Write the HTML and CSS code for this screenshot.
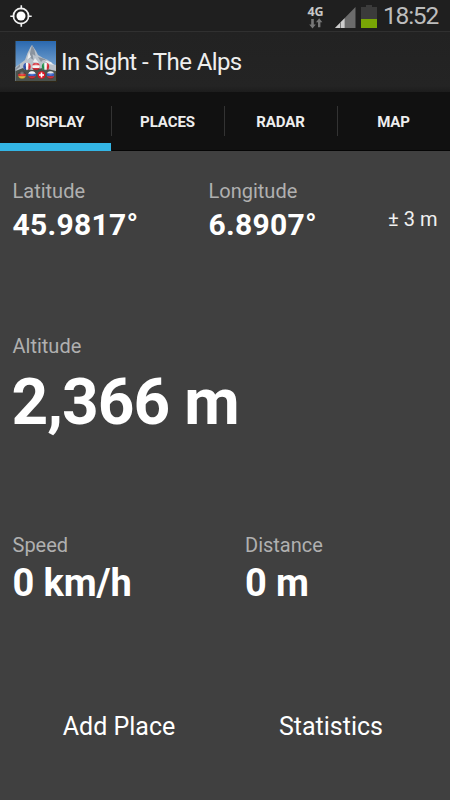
FILE: index.html
```html
<!DOCTYPE html>
<html lang="en">
<head>
<meta charset="utf-8">
<title>In Sight - The Alps</title>
<link rel="stylesheet" href="styles.css">
</head>
<body>
<div class="screen">
  <header class="status">
    <svg class="gps" width="22" height="22" viewBox="0 0 22 22">
      <circle cx="11" cy="11" r="7.6" fill="none" stroke="#f2f2f2" stroke-width="1.7"/>
      <circle cx="11" cy="11" r="4.5" fill="#fff"/>
      <path d="M11.300 .3v4M11.300 17.7v4M.3 11.300h4M17.7 11.300h4" stroke="#f2f2f2" stroke-width="1.600"/>
    </svg>
    <div class="network">
      <span class="network-type">4G</span>
      <svg width="14" height="11" viewBox="0 0 14 11" fill="#777">
        <path d="M2.2 1h2.6v5.5h2L3.5 10.5.2 6.5h2z"/>
        <path d="M9 9.2h2.4V4.2h2L10.2.2 7 4.2h2z"/>
      </svg>
    </div>
    <svg class="signal" width="21" height="21" viewBox="0 0 21 21">
      <path d="M0 21 20.5 0v21z" fill="#6b6b6b"/>
      <path d="M0 21 9.6 11.2V21z" fill="#ccc"/>
      <path d="M5.5 15v6" stroke="#777" stroke-width="1"/>
    </svg>
    <svg class="battery" width="16" height="23" viewBox="0 0 16 23">
      <path d="M5 0h6v2h5v21H0V2h5z" fill="#3b3b3b"/>
      <path d="M0 14h16v9H0z" fill="#78a505"/>
    </svg>
    <span class="clock">18:52</span>
  </header>

  <div class="action-bar">
    <svg class="app-icon" width="42" height="42" viewBox="0 0 42 42">
      <defs>
        <linearGradient id="sky" x1="0" y1="0" x2="0" y2="1">
          <stop offset="0" stop-color="#2a68ae"/><stop offset=".65" stop-color="#76a3d0"/>
        </linearGradient>
        <radialGradient id="shine" cx=".5" cy=".25" r=".75">
          <stop offset="0" stop-color="#fff" stop-opacity=".4"/><stop offset=".6" stop-color="#fff" stop-opacity="0"/><stop offset="1" stop-color="#000" stop-opacity=".4"/>
        </radialGradient>
        <clipPath id="ball"><circle r="3.8"/></clipPath>
      </defs>
      <path d="M0 0h42v42H0z" fill="#302817"/>
      <path d="M.5 1h40.5v40H.5z" fill="url(#sky)"/>
      <path d="M.5 27 6 23 10 20 12.5 13 15.5 7 17 5 19 8 21 11 23 15 28 18 33 20 37 24 41 25V41H.5z" fill="#b9c1ca"/>
      <path d="M17 5 15.5 11l-1 5-3 4 4-2 3 2-1-6 3 2-1-6zM23 17l3 5 2-2 5 4-3-5zM5 24l-4 4v2l4-3z" fill="#8a939e"/>
      <path d="M14 12l-2 8 4-3zM20 18l4 5-6-1zM28 20l6 4 5 1-3-3z" fill="#e9edf0"/>
      <path d="M.5 31 8 28 17 30 28 28 41 31V41H.5z" fill="#4b524d"/>
      <g transform="translate(12 26.5)"><g clip-path="url(#ball)"><path d="M-4-4h8v8h-8z" fill="#f5f5f5"/><path d="M-4-4h3v8h-3z" fill="#2446a4"/><path d="M1.3-4H4v8H1.3z" fill="#d3202c"/></g><circle r="3.8" fill="url(#shine)"/></g>
      <g transform="translate(21 26.5)"><g clip-path="url(#ball)"><path d="M-4-4h8v8h-8z" fill="#d3202c"/><path d="M-4-1.2h8v2.6h-8z" fill="#f5f5f5"/></g><circle r="3.8" fill="url(#shine)"/></g>
      <g transform="translate(30.5 26.5)"><g clip-path="url(#ball)"><path d="M-4-4h8v8h-8z" fill="#f5f5f5"/><path d="M-4-4h2.8v8H-4z" fill="#168a43"/><path d="M1.3-4H4v8H1.3z" fill="#d3202c"/></g><circle r="3.8" fill="url(#shine)"/></g>
      <g transform="translate(7 35)"><g clip-path="url(#ball)"><path d="M-4-4h8v3h-8z" fill="#333"/><path d="M-4-1.3h8v2.6h-8z" fill="#dc2922"/><path d="M-4 1.3h8V4h-8z" fill="#f3c52c"/></g><circle r="3.8" fill="url(#shine)"/></g>
      <g transform="translate(17 35)"><g clip-path="url(#ball)"><path d="M-4-4h8v3h-8z" fill="#f5f5f5"/><path d="M-4-1.3h8v2.6h-8z" fill="#2a55bd"/><path d="M-4 1.3h8V4h-8z" fill="#d3202c"/></g><circle r="3.8" fill="url(#shine)"/></g>
      <g transform="translate(26.5 35)"><circle r="3.8" fill="#dd1624"/><path d="M-.8-2.5H.8v1.7h1.7V.8H.8v1.7H-.8V.8h-1.7V-.8h1.7z" fill="#fff"/></g>
      <g transform="translate(35.5 35)"><g clip-path="url(#ball)"><path d="M-4-4h8v3h-8z" fill="#ddd"/><path d="M-4-1.8h8v3.1h-8z" fill="#2a55bd"/><path d="M-4 1.3h8V4h-8z" fill="#d3202c"/></g><circle r="3.8" fill="url(#shine)"/></g>
    </svg>
    <h1 class="title">In Sight - The Alps</h1>
  </div>

  <nav class="tabs">
    <div class="tab tab-active">DISPLAY</div>
    <div class="tab">PLACES</div>
    <div class="tab">RADAR</div>
    <div class="tab">MAP</div>
  </nav>

  <main class="content">
    <section class="row row-position">
      <div class="field field-lat"><div class="label">Latitude</div><div class="value coord">45.9817°</div></div>
      <div class="field"><div class="label">Longitude</div><div class="value coord">6.8907°</div></div>
      <div class="accuracy">± 3 m</div>
    </section>
    <section class="row row-altitude">
      <div class="field"><div class="label">Altitude</div><div class="value altitude">2,366 m</div></div>
    </section>
    <section class="row row-travel">
      <div class="field field-speed"><div class="label">Speed</div><div class="value travel">0 km/h</div></div>
      <div class="field"><div class="label">Distance</div><div class="value travel">0 m</div></div>
    </section>
    <section class="actions">
      <div class="action">Add Place</div>
      <div class="action">Statistics</div>
    </section>
  </main>
</div>
</body>
</html>
```
FILE: styles.css
```css
* { box-sizing: border-box; }
body { margin: 0; background: #404040; font-family: Roboto, "Liberation Sans", sans-serif; }
svg { display: block; flex: none; }
.screen { width: 450px; height: 800px; display: flex; flex-direction: column; overflow: hidden; white-space: nowrap; }
.status { height: 31px; flex: none; display: flex; align-items: flex-start; background: #1f1f1f; color: #bdbdbd; padding-left: 10px; }
.gps { margin: 5px auto 0 0; }
.network { width: 17px; margin: 5px 11px 0 0; display: flex; flex-direction: column; align-items: center; }
.network-type { font: bold 12.5px/13px "Open Sans", sans-serif; color: #c7c7c7; }
.signal { margin: 7px 5px 0 0; }
.battery { margin: 5px 6px 0 0; }
.clock { width: 67px; font-size: 24.5px; letter-spacing: -1.2px; line-height: 32px; }
.action-bar { height: 61px; flex: none; display: flex; align-items: center; padding: 0 0 2px 15px; background: linear-gradient(#222, #242424 90%, #1d1d1d); border-top: 1px solid #303030; }
.title { margin: 2px 0 0 4px; font-size: 24px; font-weight: 400; letter-spacing: -.6px; line-height: 30px; color: #eee; }
.tabs { height: 59px; flex: none; display: grid; grid-template-columns: 112px 113px 113px 112px; background: #111; }
.tab { display: flex; align-items: center; justify-content: center; padding: 1px 2px 0 0; font-size: 15px; font-weight: 700; letter-spacing: -.1px; color: #eee; background: linear-gradient(#333, #333) right 14px / 1px 30px no-repeat, linear-gradient(#050505, #050505) left bottom / 100% 1px no-repeat; }
.tab:last-child { padding-right: 1px; background: linear-gradient(#050505, #050505) left bottom / 100% 1px no-repeat; }
.tab-active { background: linear-gradient(#333, #333) right 14px / 1px 30px no-repeat, linear-gradient(#33b5e5, #33b5e5) left bottom / 111px 8px no-repeat; }
.content { flex: 1; padding: 28px 12.5px 0 12.5px; background: #404040; }
.row { display: flex; }
.row-position { height: 155px; }
.row-altitude { height: 199px; }
.row-travel { height: 179px; }
.field-lat { width: 196px; }
.field-speed { width: 232.5px; }
.label { font-size: 20px; line-height: 24px; color: #b0b0b0; }
.value { font-weight: 700; color: #fff; }
.coord { font-size: 30px; letter-spacing: .3px; line-height: 36px; margin-top: 4px; }
.altitude { font-size: 64px; letter-spacing: -.95px; line-height: 72px; margin: 9px 0 0 -1px; }
.travel { font-size: 38px; letter-spacing: -.1px; line-height: 44px; margin-top: 4px; }
.accuracy { margin: 28px 0 0 auto; font-size: 20px; line-height: 24px; color: #f0f0f0; }
.actions { display: grid; grid-template-columns: 213px 211px; }
.action { text-align: center; font-size: 25px; line-height: 30px; color: #fff; }
```
